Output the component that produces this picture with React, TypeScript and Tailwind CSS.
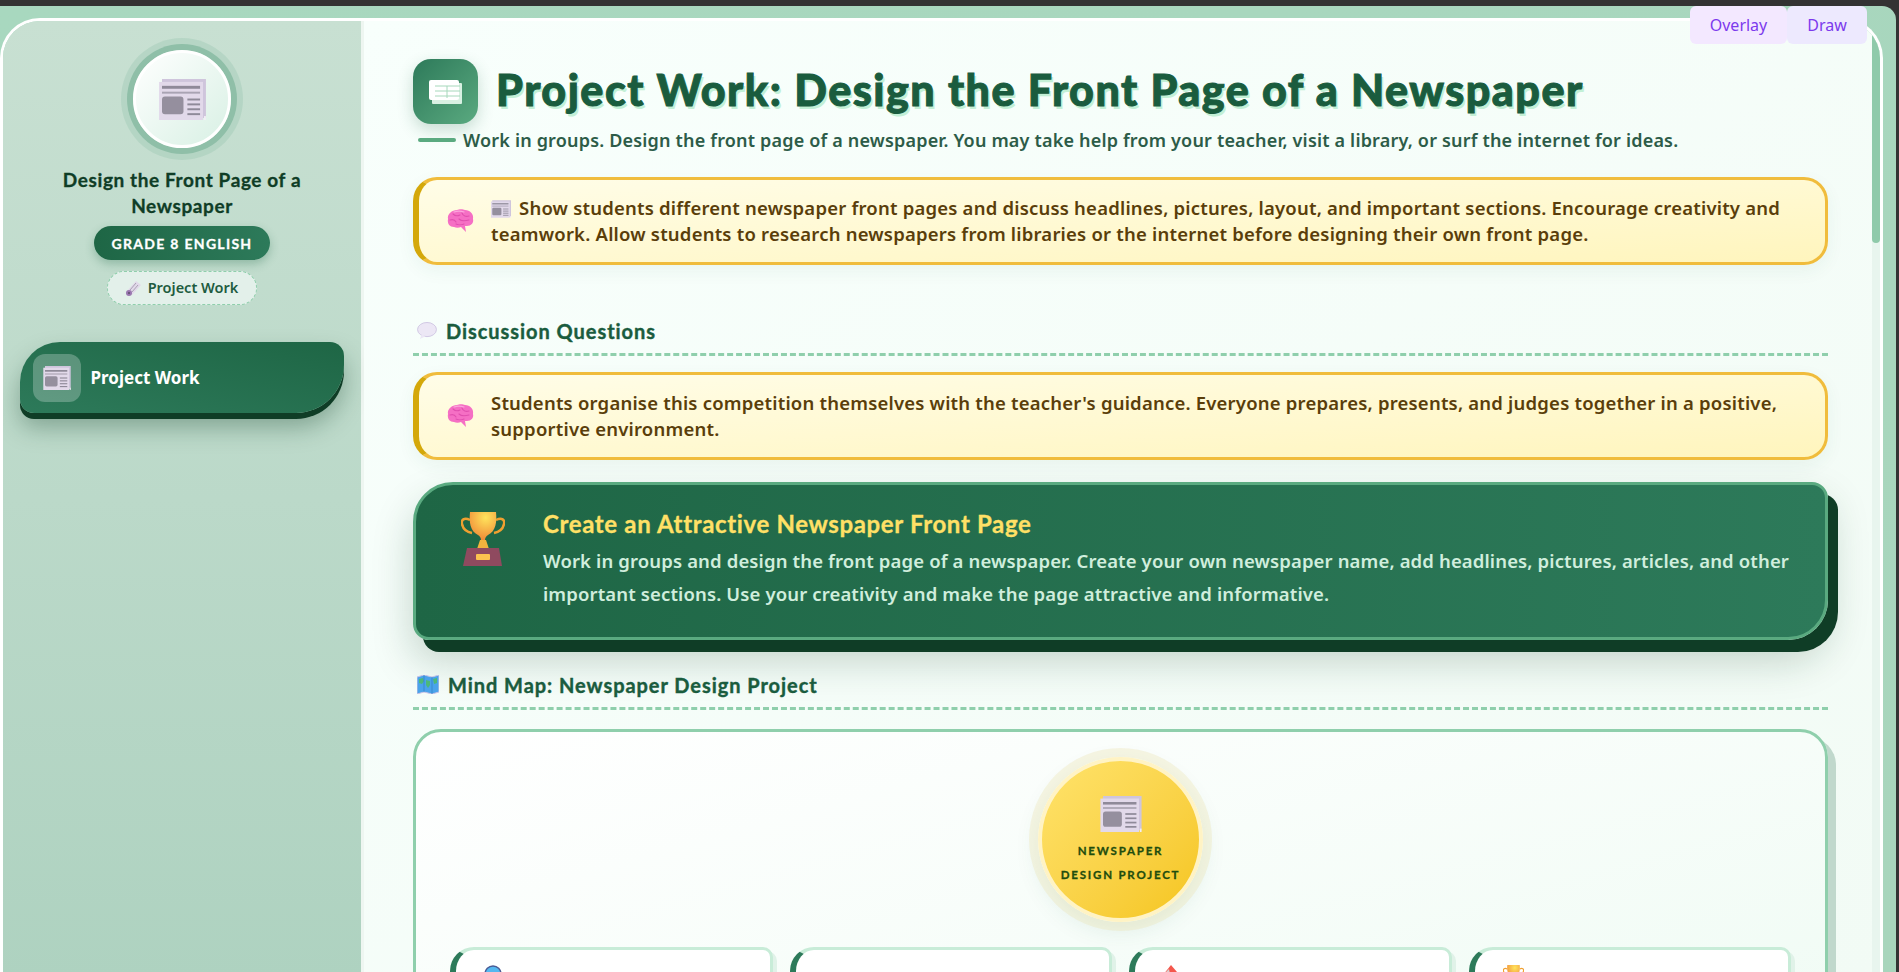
import React from 'react';

const display = "font-['Lato','Noto_Sans',sans-serif]";
const body = "font-['Noto_Sans','Open_Sans',sans-serif]";

// Newspaper drawn as in the reference (lilac sheet, grey picture block)
const NewsIcon = ({ className = '' }: { className?: string }) => (
  <svg className={className} viewBox="0 0 48 42" fill="none">
    <rect x="3" y="0" width="45" height="40" fill="#cfc5dc" />
    <rect x="46" y="38" width="2" height="4" fill="#f2eef6" />
    <rect x="0" y="3" width="45" height="39" fill="#e2d9ea" />
    <rect x="3" y="7" width="39" height="3" fill="#8f8a99" />
    <rect x="3" y="13" width="39" height="2" fill="#a9a3b3" />
    <rect x="3" y="18" width="22" height="18" rx="3" fill="#958f9e" />
    <rect x="29" y="20" width="13" height="2" fill="#8f8a99" />
    <rect x="29" y="25" width="13" height="2" fill="#8f8a99" />
    <rect x="29" y="30" width="13" height="2" fill="#8f8a99" />
    <rect x="29" y="35" width="13" height="2" fill="#8f8a99" />
  </svg>
);

const WhiteNewsIcon = () => (
  <svg className="w-[33px] h-[24px]" viewBox="0 0 33 24" fill="none">
    <rect x="3" y="3" width="30" height="21" rx="1" fill="#d8f0e2" />
    <rect x="0" y="0" width="30" height="20" rx="2" fill="#ffffff" />
    <path d="M6 6h25M6 11h25M6 16h25M18 6v12" stroke="#a6d8bb" strokeWidth="1" />
  </svg>
);

const RolledNews = () => (
  <svg className="w-[15px] h-[16px]" viewBox="0 0 15 16" fill="none">
    <path d="M1 11 10 1l5 4-9 10z" fill="#e2d9ea" />
    <path d="M4 10 10 3M6 12l6-7" stroke="#a9a3b3" strokeWidth="1" />
    <circle cx="3" cy="13" r="3" fill="#9a78b0" />
    <circle cx="3" cy="13" r="1" fill="#5d4a6b" />
  </svg>
);

const BrainIcon = () => (
  <svg className="w-[28px] h-[25px] shrink-0" viewBox="0 0 28 25" fill="none">
    <path d="M2 10C1 5 6 1 11 1c2-1 6-1 8 0 5 0 9 4 8 9 1 4-2 7-6 7-1 0-2 0-2 0l1 6-5-5c-2 1-5 1-7 0-4 0-7-3-6-8z" fill="#f56fc4" />
    <path d="M7 5c2 2 5 2 7 1M16 4c1 3 4 4 7 3M4 11c3-1 5 0 6 2M13 10c2 2 6 2 10 1M10 15c2 1 6 1 8 0" stroke="#e04fae" strokeWidth="1.1" strokeLinecap="round" />
    <path d="M8 3c3-1 7-1 10 0" stroke="#fca6de" strokeWidth="1.2" strokeLinecap="round" />
  </svg>
);

const TrophyIcon = ({ className = '' }: { className?: string }) => (
  <svg className={className} viewBox="0 0 44 54" fill="none">
    <defs>
      <radialGradient id="cup" cx="0.6" cy="0.2" r="0.9">
        <stop offset="0" stopColor="#ffe45c" />
        <stop offset="1" stopColor="#ee7f33" />
      </radialGradient>
    </defs>
    <path d="M9 8C3 5 0 8 1 12c1 5 5 8 10 9M35 8c6-3 9 0 8 4-1 5-5 8-10 9" stroke="#f0a030" strokeWidth="2.5" />
    <path d="M9 0h26c1 10 0 19-8 23-2 1-3 3-3 5h-4c0-2-1-4-3-5C9 19 8 10 9 0z" fill="url(#cup)" />
    <path d="M19 28h6l3 9H16z" fill="#f3b33e" />
    <path d="M6 36h32l3 18H2z" fill="#8f4a5f" />
    <rect x="15" y="42" width="14" height="6" rx="1" fill="#fbc34f" />
  </svg>
);

const MapIcon = () => (
  <svg className="w-[22px] h-[19px]" viewBox="0 0 22 19" fill="none">
    <path d="M0 2 7 0l8 2 7-2v17l-7 2-8-2-7 2z" fill="#4aa3ea" stroke="#c9c2e6" strokeWidth="1" />
    <path d="M2 4l4-1 1 3-2 3-3-1zM9 5l4 1v4l-2 3-2-3zM16 4l4-1v5l-3 1z" fill="#4cb87a" />
    <path d="M7 0v17M15 2v17" stroke="#2f7fc4" strokeWidth="0.7" />
  </svg>
);

const BubbleIcon = () => (
  <svg className="w-[20px] h-[17px]" viewBox="0 0 21 18" fill="none">
    <ellipse cx="10.5" cy="8" rx="10" ry="7.5" fill="#ece7f5" stroke="#cfc6e2" />
    <path d="M5 13l-2 5 6-3z" fill="#ece7f5" />
  </svg>
);

const MagnifierIcon = () => (
  <svg className="w-[20px] h-[20px] shrink-0" viewBox="0 0 20 20" fill="none">
    <circle cx="9" cy="9" r="8" fill="#55b8f0" stroke="#4a5a94" strokeWidth="1.4" />
    <path d="M15 15l4 4" stroke="#4a5a94" strokeWidth="2.5" />
  </svg>
);

const PinIcon = () => (
  <svg className="w-[14px] h-[20px] shrink-0" viewBox="0 0 14 20" fill="none">
    <path d="M8 0l6 7-6 7-8-4z" fill="#f4574c" />
    <path d="M0 10l6-6 2 10z" fill="#d9cfcf" />
  </svg>
);

const Callout = ({ children }: { children: React.ReactNode }) => (
  <div className="flex items-center gap-[17px] h-[88px] pl-[27px] pr-[24px] rounded-[24px] border-[3px] border-l-[6px] border-[#f0bc3c] border-l-[#d4a80a] bg-gradient-to-br from-[#fffde8] to-[#fff5bd] shadow-[0_6px_18px_rgba(30,102,69,0.06)]">
    <BrainIcon />
    <p className={`${body} text-[18.5px] leading-[26px] font-semibold text-[#5a3e0a] tracking-[0.2px]`}>{children}</p>
  </div>
);

const SectionHeading = ({ icon, title }: { icon: React.ReactNode; title: string }) => (
  <div className="flex items-center gap-[9px] h-[33px] pl-[4px] border-b-[3px] border-dashed border-[#8fcfac]">
    <span className="flex -mt-[15px]">{icon}</span>
    <h2 className={`${display} -mt-[15px] text-[20px] tracking-[0.95px] font-bold text-[#1a5c3e] [-webkit-text-stroke:0.4px_#1a5c3e]`}>{title}</h2>
  </div>
);

const MapCard = ({ icon, title }: { icon: React.ReactNode; title: string }) => (
  <div className="h-[120px] rounded-[10px] rounded-tl-[24px] border-[3px] border-l-[6px] border-[#c8ecd8] border-l-[#2d7a5a] bg-white shadow-[4px_4px_0_#e0f2e8] pt-[15px] pl-[28px] flex gap-[12px] items-start">
    {icon}
    <span className={`${display} mt-[5px] text-[18px] font-bold text-[#1a5c3e] leading-[22px]`}>{title}</span>
  </div>
);

export default function App() {
  return (
    <div className="h-[972px] overflow-hidden bg-[#333333] pt-[6px] pr-[3px]">
      <div className="relative h-full rounded-tr-[14px] bg-gradient-to-br from-[#a8d8bf] to-[#a8d5bc] pt-[12px] pr-[13px]">
        {/* Tool buttons floating over the page */}
        <div className={`${body} absolute top-0 right-[29px] z-10 flex text-[16px] leading-[36px] text-[#7c3aed]`}>
          <button className="w-[97px] h-[38px] bg-[#f3e8ff] rounded-[6px]">Overlay</button>
          <button className="w-[80px] h-[38px] bg-[#ede9fe] rounded-[6px]">Draw</button>
        </div>

        <div className="flex h-[960px] rounded-t-[40px] border-[3px] border-b-0 border-white overflow-hidden">
          {/* Sidebar */}
          <aside className="w-[361px] shrink-0 border-r-[3px] border-[#eef6f1] bg-gradient-to-b from-[#c8e0d2] to-[#aed2c0] flex flex-col items-center pt-[29px]">
            <div className="w-[98px] h-[98px] rounded-full border-[3px] border-white bg-gradient-to-br from-white to-[#d8f0e4] flex items-center justify-center shadow-[0_0_0_6px_#8fbfa8,0_0_0_12px_rgba(143,191,168,0.3)]">
              <NewsIcon className="w-[47px] h-[41px]" />
            </div>
            <h1 className={`${display} w-[280px] mt-[19px] text-center text-[19px] leading-[26px] tracking-[0.6px] font-bold text-[#0f3d26] [-webkit-text-stroke:0.3px_#0f3d26]`}>
              Design the Front Page of a Newspaper
            </h1>
            <div className={`${display} mt-[7px] h-[34px] w-[176px] flex items-center justify-center rounded-full bg-gradient-to-r from-[#1e6645] to-[#2d7a5a] text-[14px] font-bold tracking-[1.3px] text-white [-webkit-text-stroke:0.3px_#ffffff] shadow-[0_4px_10px_rgba(30,102,69,0.3)]`}>
              GRADE 8 ENGLISH
            </div>
            <div className={`${body} mt-[11px] h-[34px] w-[150px] flex items-center justify-center gap-[7px] rounded-full border border-dashed border-[#8fcfac] bg-[#e3f0ea] text-[14.5px] font-semibold text-[#1e5c40]`}>
              <RolledNews />
              Project Work
            </div>
            <nav className="mt-[37px] w-[324px] h-[71px] -ml-[1px] flex items-center gap-[10px] pl-[13px] rounded-[40px_14px_48px_14px] bg-gradient-to-tr from-[#2d7a5a] to-[#1e6645] shadow-[0_6px_0_#0f3d26,0_14px_24px_rgba(15,61,38,0.35)]">
              <span className="w-[48px] h-[48px] rounded-[12px] bg-white/25 flex items-center justify-center">
                <NewsIcon className="w-[28px] h-[24px]" />
              </span>
              <span className={`${body} text-[17px] font-bold text-white`}>Project Work</span>
            </nav>
          </aside>

          {/* Main column */}
          <main className="relative flex-1 overflow-hidden bg-gradient-to-br from-[#f8fffc] to-[#f2fbf5] pl-[49px] pr-[52px] pt-[38px]">
            <div className="absolute top-0 right-0 bottom-0 w-[8px] bg-[#e8f5ee]">
              <div className="h-[222px] rounded-b-[4px] bg-[#8fcaaa]" />
            </div>

            <header className="flex items-center gap-[18px] h-[65px]">
              <div className="w-[65px] h-[65px] rounded-[18px] bg-gradient-to-br from-[#2d7a5a] to-[#5aaa80] flex items-center justify-center shadow-[0_6px_16px_rgba(30,102,69,0.22)]">
                <WhiteNewsIcon />
              </div>
              <h1 className={`${display} -mt-[4px] text-[43px] leading-[50px] tracking-[1.5px] font-black text-[#1a5c3e] [-webkit-text-stroke:1px_#1a5c3e] [text-shadow:2px_3px_0_#c3f0d6]`}>
                Project Work: Design the Front Page of a Newspaper
              </h1>
            </header>
            <div className="flex items-center gap-[7px] pl-[5px] mt-[3px] h-[26px]">
              <span className="w-[38px] h-[4px] rounded-full bg-[#5aaa80]" />
              <p className={`${body} text-[18px] tracking-[0.18px] font-semibold text-[#2d5c48]`}>
                Work in groups. Design the front page of a newspaper. You may take help from your teacher, visit a library, or surf the internet for ideas.
              </p>
            </div>

            <div className="mt-[24px]">
              <Callout>
                <span className="inline-flex align-[-3px] mr-[8px]"><NewsIcon className="w-[20px] h-[18px]" /></span>
                Show students different newspaper front pages and discuss headlines, pictures, layout, and important sections. Encourage creativity and teamwork. Allow students to research newspapers from libraries or the internet before designing their own front page.
              </Callout>
            </div>

            <div className="mt-[58px]">
              <SectionHeading icon={<BubbleIcon />} title="Discussion Questions" />
            </div>

            <div className="mt-[16px]">
              <Callout>
                Students organise this competition themselves with the teacher's guidance. Everyone prepares, presents, and judges together in a positive, supportive environment.
              </Callout>
            </div>

            {/* Task banner */}
            <section className="mt-[22px] h-[158px] flex rounded-[40px_16px_40px_16px] border-[3px] border-[#5aaa80] bg-gradient-to-r from-[#1e6645] to-[#2d7a5a] pl-[45px] pt-[27px] shadow-[10px_12px_0_#0f3d26,0_20px_40px_rgba(15,61,38,0.22)]">
              <TrophyIcon className="w-[44px] h-[54px] shrink-0" />
              <div className="ml-[38px] -mt-[2px] pr-[14px]">
                <h3 className={`${display} text-[24px] leading-[28px] tracking-[0.65px] font-bold text-[#ffe066] [-webkit-text-stroke:0.3px_#ffe066]`}>Create an Attractive Newspaper Front Page</h3>
                <p className={`${body} mt-[6px] text-[18.5px] leading-[33px] tracking-[0.13px] font-semibold text-[#d0eedd]`}>
                  Work in groups and design the front page of a newspaper. Create your own newspaper name, add headlines, pictures, articles, and other important sections. Use your creativity and make the page attractive and informative.
                </p>
              </div>
            </section>

            <div className="mt-[37px]">
              <SectionHeading icon={<MapIcon />} title="Mind Map: Newspaper Design Project" />
            </div>

            {/* Mind map panel */}
            <section className="mt-[19px] h-[400px] rounded-[28px] border-[3px] border-[#8fcfac] bg-gradient-to-br from-white to-[#eefbf3] shadow-[8px_8px_0_#c0d8cc] px-[34px] pt-[25px]">
              <div className="flex justify-center">
                <div className="w-[165px] h-[165px] rounded-full border-[4px] border-[#fff3c4] bg-gradient-to-br from-[#ffe36a] to-[#f5c518] flex flex-col items-center justify-center shadow-[0_0_0_9px_rgba(234,226,170,0.3),0_8px_24px_rgba(30,102,69,0.1)]">
                  <NewsIcon className="w-[42px] h-[36px] mt-[4px]" />
                  <div className={`${display} mt-[7px] text-center text-[11.5px] leading-[24px] font-bold tracking-[1.8px] text-[#1f4d0e] [-webkit-text-stroke:0.3px_#1f4d0e]`}>
                    NEWSPAPER<br />DESIGN PROJECT
                  </div>
                </div>
              </div>
              <div className="mt-[25px] grid grid-cols-4 gap-[17px]">
                <MapCard title="Research" icon={<MagnifierIcon />} />
                <MapCard title="Page Layout" icon={<span className="block w-[20px] shrink-0" />} />
                <MapCard title="Headlines" icon={<PinIcon />} />
                <MapCard title="Final Look" icon={<TrophyIcon className="w-[21px] h-[26px] shrink-0" />} />
              </div>
            </section>
          </main>
        </div>
      </div>
    </div>
  );
}
